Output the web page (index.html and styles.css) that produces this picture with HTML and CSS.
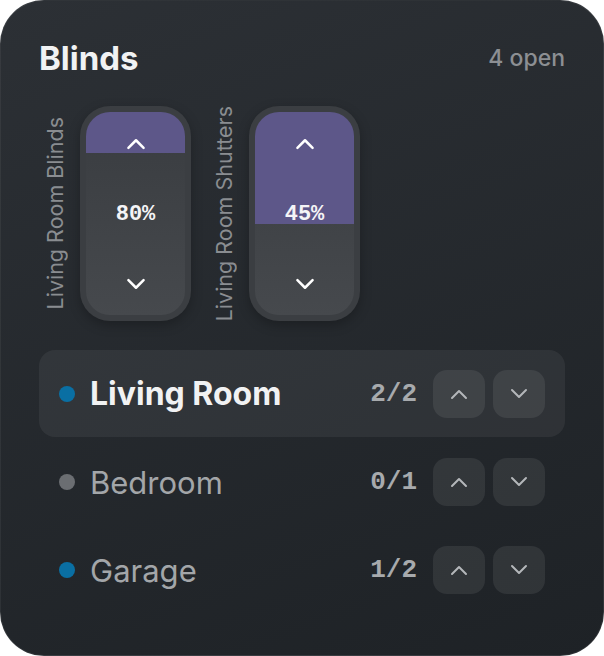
FILE: index.html
```html
<!DOCTYPE html>
<html lang="en">
  <head>
    <meta charset="UTF-8" />
    <meta name="viewport" content="width=device-width, initial-scale=1.0" />
    <title>Blinds</title>
    <link rel="stylesheet" href="styles.css">
  </head>
  <body>
    <div class="card">
      <div class="header">
        <h2>Blinds</h2>
        <span class="open-count">4 open</span>
      </div>

      <div class="sliders">
        <div class="slider-group">
          <span class="slider-label">Living Room Blinds</span>
          <div class="slider">
            <div class="slider-inner">
              <div class="slider-fill" style="height: 20%"></div>
              <div class="slider-content">
                <svg class="chev" viewBox="0 0 20 12"><path d="M3 10 L10 3 L17 10" /></svg>
                <span class="pct">80%</span>
                <svg class="chev" viewBox="0 0 20 12"><path d="M3 2 L10 9 L17 2" /></svg>
              </div>
            </div>
          </div>
        </div>
        <div class="slider-group">
          <span class="slider-label">Living Room Shutters</span>
          <div class="slider">
            <div class="slider-inner">
              <div class="slider-fill" style="height: 55%"></div>
              <div class="slider-content">
                <svg class="chev" viewBox="0 0 20 12"><path d="M3 10 L10 3 L17 10" /></svg>
                <span class="pct">45%</span>
                <svg class="chev" viewBox="0 0 20 12"><path d="M3 2 L10 9 L17 2" /></svg>
              </div>
            </div>
          </div>
        </div>
      </div>

      <div class="rooms">
        <div class="room active">
          <span class="dot on"></span>
          <span class="room-name">Living Room</span>
          <span class="room-count">2/2</span>
          <button class="room-btn"><svg viewBox="0 0 20 12"><path d="M3 10 L10 3 L17 10" /></svg></button>
          <button class="room-btn"><svg viewBox="0 0 20 12"><path d="M3 2 L10 9 L17 2" /></svg></button>
        </div>
        <div class="room">
          <span class="dot"></span>
          <span class="room-name">Bedroom</span>
          <span class="room-count">0/1</span>
          <button class="room-btn"><svg viewBox="0 0 20 12"><path d="M3 10 L10 3 L17 10" /></svg></button>
          <button class="room-btn"><svg viewBox="0 0 20 12"><path d="M3 2 L10 9 L17 2" /></svg></button>
        </div>
        <div class="room">
          <span class="dot on"></span>
          <span class="room-name">Garage</span>
          <span class="room-count">1/2</span>
          <button class="room-btn"><svg viewBox="0 0 20 12"><path d="M3 10 L10 3 L17 10" /></svg></button>
          <button class="room-btn"><svg viewBox="0 0 20 12"><path d="M3 2 L10 9 L17 2" /></svg></button>
        </div>
      </div>
    </div>
  </body>
</html>
```

FILE: styles.css
```css
/* Reset */
* {
  box-sizing: border-box;
  margin: 0;
  padding: 0;
  font-family: "Inter", "Liberation Sans", sans-serif;
}

body {
  background: #ffffff;
  width: 604px;
  height: 656px;
}

/* Card */
.card {
  width: 604px;
  height: 656px;
  border-radius: 44px;
  border: 1px solid rgba(255, 255, 255, 0.07);
  background: linear-gradient(160deg, #2c3035, #1e2226);
  padding: 36px 38px 0 38px;
  color: #f1f2f3;
}

.header {
  display: flex;
  justify-content: space-between;
  align-items: center;
  height: 42px;
}

h2 {
  font-size: 33px;
  font-weight: 700;
  color: #f1f2f3;
}

.open-count {
  font-size: 23px;
  font-weight: 500;
  color: #8c8f93;
}

/* Sliders */
.sliders {
  display: flex;
  gap: 21px;
  margin-top: 27px;
  padding-left: 4px;
}

.slider-group {
  display: flex;
  align-items: center;
  gap: 12px;
}

.slider-label {
  writing-mode: vertical-rl;
  transform: rotate(180deg);
  font-size: 21.5px;
  line-height: 25px;
  color: #8a8d91;
  white-space: nowrap;
}

.slider {
  width: 111px;
  height: 215px;
  border-radius: 30px;
  padding: 6px;
  background: #3b3e42;
  box-shadow: 0 4px 12px rgba(0, 0, 0, 0.25);
}

.slider-inner {
  position: relative;
  height: 100%;
  border-radius: 24px;
  overflow: hidden;
  background: linear-gradient(180deg, #393c40, #46494d);
}

.slider-fill {
  position: absolute;
  top: 0;
  left: 0;
  right: 0;
  background: #5d5789;
}

.slider-content {
  position: relative;
  height: 100%;
  display: flex;
  flex-direction: column;
  align-items: center;
  justify-content: space-between;
  padding: 25px 0 24px;
}

.chev {
  width: 22px;
  height: 13px;
}

.chev path,
.room-btn path {
  fill: none;
  stroke: #ffffff;
  stroke-width: 2.3;
  stroke-linecap: round;
  stroke-linejoin: round;
}

.pct {
  font-family: "Liberation Mono", monospace;
  font-weight: 700;
  font-size: 22px;
  color: #f4f4f6;
}

/* Rooms */
.rooms {
  margin-top: 29px;
  display: flex;
  flex-direction: column;
}

.room {
  display: flex;
  align-items: center;
  height: 88px;
  padding: 0 20px;
  border-radius: 16px;
}

.room.active {
  height: 87px;
  margin-bottom: 1px;
  background: rgba(255, 255, 255, 0.06);
}

.dot {
  width: 16px;
  height: 16px;
  border-radius: 50%;
  background: #6b6e72;
  flex-shrink: 0;
}

.dot.on {
  background: #0a6fa3;
}

.room-name {
  margin-left: 15px;
  flex: 1;
  font-size: 31px;
  font-weight: 400;
  color: #a3a6a9;
}

.room.active .room-name {
  font-size: 32px;
  font-weight: 700;
  color: #f1f2f3;
}

.room-count {
  font-family: "Liberation Mono", monospace;
  font-weight: 700;
  font-size: 26px;
  color: #a7aaad;
  margin-right: 16px;
}

.room-btn {
  width: 52px;
  height: 48px;
  border: none;
  border-radius: 14px;
  background: rgba(255, 255, 255, 0.08);
  display: flex;
  align-items: center;
  justify-content: center;
  cursor: pointer;
}

.room-btn + .room-btn {
  margin-left: 8px;
}

.room-btn svg {
  width: 20px;
  height: 12px;
}

.room-btn path {
  stroke: #b4b7ba;
  stroke-width: 2;
}
```
